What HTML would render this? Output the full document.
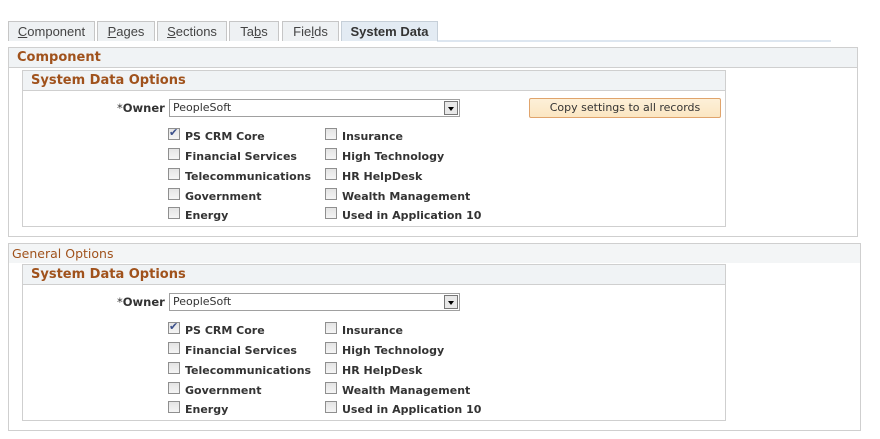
<!DOCTYPE html>
<html><head><style>
*{margin:0;padding:0;box-sizing:border-box}
body{width:880px;height:439px;background:#fff;font-family:"DejaVu Sans","Liberation Sans",sans-serif;font-size:11px;color:#333;position:relative;overflow:hidden}
.a{position:absolute}
.tab{position:absolute;top:21px;height:20px;border:1px solid #c6c6c6;border-bottom:none;background:#eef1f3;color:#444;font-family:"Liberation Sans",sans-serif;font-size:13px;text-align:center;line-height:19px}
.tab.on{background:#e3ebf3;font-weight:bold;color:#333;border-color:#c6cfd8}
.box{position:absolute;border:1px solid #cfcfcf;background:#fff}
.hd{position:absolute;left:0;right:0;top:0;height:20px;background:#f0f3f5;border-bottom:1px solid #cfcfcf;color:#a0521c;font-weight:bold;font-size:13px;padding-left:8px;line-height:19px}
.lbl{position:absolute;font-weight:bold;color:#333;font-size:11px;white-space:nowrap}
.cb{position:absolute;width:12px;height:12px;border:1px solid #8f8f8f;background:linear-gradient(#e4e4e4,#f4f4f4)}
.sel{position:absolute;height:18px;border:1px solid #a0a0a0;background:#fff;font-size:11px;line-height:16px;padding-left:3px;color:#333}
.sel i{position:absolute;right:1px;top:1px;width:14px;height:14px;border:1px solid #777;background:#e8e8e8}
.sel i:after{content:"";position:absolute;left:3px;top:5px;border-left:3px solid transparent;border-right:3px solid transparent;border-top:4px solid #000}
</style></head><body>
<div class="a" style="left:437px;top:40px;width:394px;height:2px;background:#dde6f0"></div>
<div class="tab" style="left:8px;width:87px"><u>C</u>omponent</div>
<div class="tab" style="left:97px;width:58px"><u>P</u>ages</div>
<div class="tab" style="left:157px;width:70px"><u>S</u>ections</div>
<div class="tab" style="left:229px;width:50px">Ta<u>b</u>s</div>
<div class="tab" style="left:282px;width:57px">Fie<u>l</u>ds</div>
<div class="tab on" style="left:341px;width:97px">System Data</div>

<div class="box" style="left:8px;top:47px;width:850px;height:190px">
 <div class="hd">Component</div>
</div>
<div class="box" style="left:22px;top:70px;width:704px;height:157px">
 <div class="hd">System Data Options</div>
</div>
<div class="box" style="left:8px;top:243px;width:853px;height:188px">
 <div class="hd" style="font-weight:normal;height:19px;background:#f3f5f6;border-bottom:none;padding-left:3px;font-size:12.5px">General Options</div>
</div>
<div class="box" style="left:22px;top:264px;width:704px;height:157px">
 <div class="hd">System Data Options</div>
</div>

<div class="a" style="left:529px;top:98px;width:192px;height:20px;border:1px solid #e0a46c;background:linear-gradient(#fdf0d8,#fbe6c2);border-radius:2px;text-align:center;line-height:18px;font-size:11px;color:#333">Copy settings to all records</div>

<div id="g1"></div>
<script>
function grp(top){
 var h='';
 h+='<div class="lbl" style="left:117px;top:'+(top-6)+'px;font-size:11.5px"><span style="font-weight:normal">*</span>Owner</div>';
 h+='<div class="sel" style="left:169px;top:'+(top-8)+'px;width:291px">PeopleSoft<i></i></div>';
 var c1=['PS CRM Core','Financial Services','Telecommunications','Government','Energy'];
 var c2=['Insurance','High Technology','HR HelpDesk','Wealth Management','Used in Application 10'];
 var rows=[29,49,69,89,108];
 for(var i=0;i<5;i++){
  var y=top+rows[i];
  h+='<div class="cb" style="left:168px;top:'+(y-8)+'px">'+(i==0?'<span style="position:absolute;left:0;top:-3px;font-size:11px;color:#3a4f8a">✔</span>':'')+'</div>';
  h+='<div class="lbl" style="left:185px;top:'+(y-6)+'px">'+c1[i]+'</div>';
  h+='<div class="cb" style="left:325px;top:'+(y-8)+'px"></div>';
  h+='<div class="lbl" style="left:342px;top:'+(y-6)+'px">'+c2[i]+'</div>';
 }
 return h;
}
document.getElementById('g1').innerHTML=grp(107)+grp(301);
</script>
</body></html>
